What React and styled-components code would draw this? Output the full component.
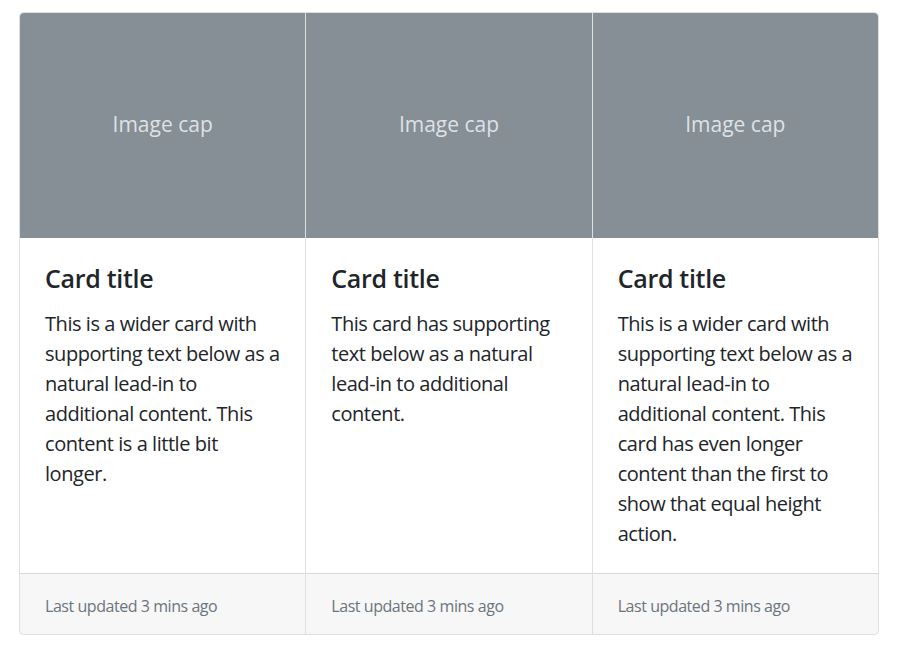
import React from 'react';
import styled, { createGlobalStyle } from 'styled-components';

const GlobalStyle = createGlobalStyle`
  html, body {
    margin: 0;
    background: #fff;
  }
  body {
    font-family: "Open Sans", "Noto Sans", sans-serif;
    font-size: 20px;
    line-height: 1.5;
    color: #212529;
  }
`;

const Page = styled.div`
  padding: 12px 23px 20px 19px;
`;

const CardGroup = styled.div`
  display: flex;
`;

const Card = styled.div`
  flex: 1 0 0;
  min-width: 0;
  display: flex;
  flex-direction: column;
  border: 1px solid rgba(0, 0, 0, 0.125);
  background: #fff;
  & + & {
    border-left: 0;
  }
  &:first-child {
    border-radius: 5px 0 0 5px;
  }
  &:last-child {
    border-radius: 0 5px 5px 0;
  }
  &:first-child > div:first-child {
    border-top-left-radius: 4px;
  }
  &:last-child > div:first-child {
    border-top-right-radius: 4px;
  }
`;

const ImageCap = styled.div`
  height: 225px;
  background: #868e96;
  color: #dee2e6;
  display: flex;
  align-items: center;
  justify-content: center;
  font-size: 21px;
  padding-bottom: 2px;
  box-sizing: border-box;
`;

const Body = styled.div`
  flex: 1 1 auto;
  padding: 25px 25px 24px;
`;

const Title = styled.h5`
  margin: 0 0 16px;
  font-size: 25px;
  font-weight: 600;
  line-height: 1.2;
  letter-spacing: -0.3px;
`;

const Text = styled.p`
  margin: 0;
  letter-spacing: -0.45px;
`;

const Footer = styled.div`
  padding: 16px 25px 14px;
  background: rgba(0, 0, 0, 0.03);
  border-top: 1px solid rgba(0, 0, 0, 0.125);
  small {
    font-size: 16px;
    color: #6c757d;
    letter-spacing: -0.45px;
  }
`;

const cards = [
  'This is a wider card with supporting text below as a natural lead-in to additional content. This content is a little bit longer.',
  'This card has supporting text below as a natural lead-in to additional content.',
  'This is a wider card with supporting text below as a natural lead-in to additional content. This card has even longer content than the first to show that equal height action.',
];

export default function App() {
  return (
    <>
      <GlobalStyle />
      <Page>
        <CardGroup>
          {cards.map((text, i) => (
            <Card key={i}>
              <ImageCap>Image cap</ImageCap>
              <Body>
                <Title>Card title</Title>
                <Text>{text}</Text>
              </Body>
              <Footer>
                <small>Last updated 3 mins ago</small>
              </Footer>
            </Card>
          ))}
        </CardGroup>
      </Page>
    </>
  );
}
